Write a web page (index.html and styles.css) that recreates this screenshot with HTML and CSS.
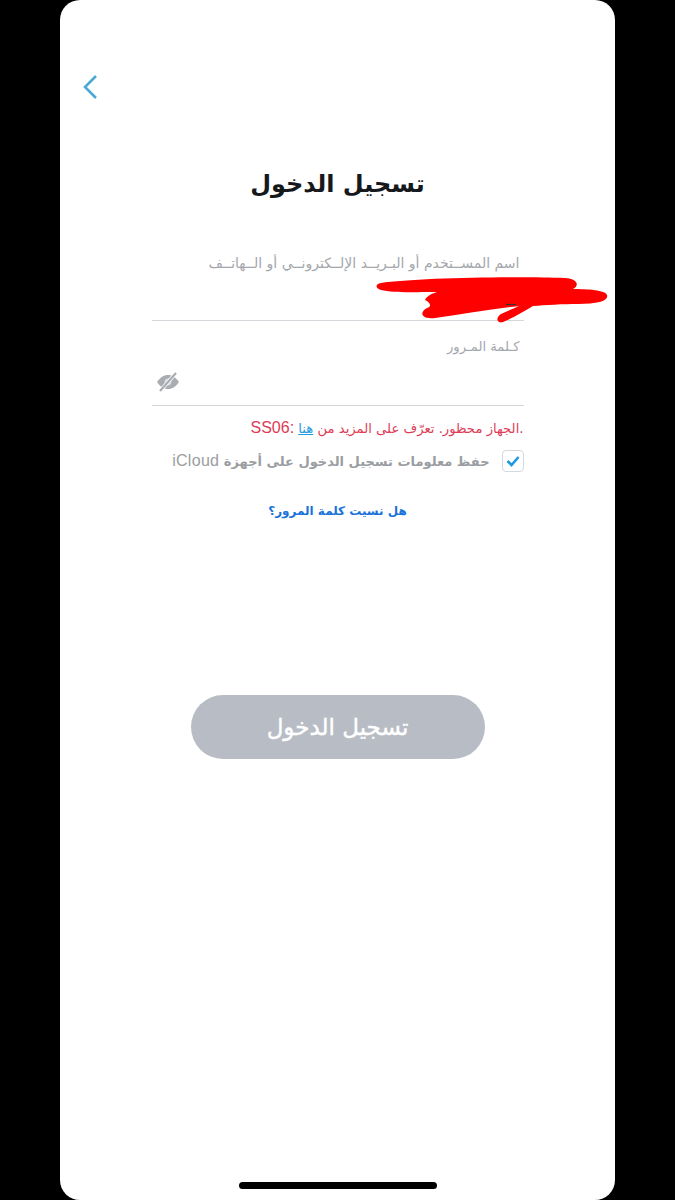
FILE: index.html
```html
<!DOCTYPE html>
<html lang="ar">
<head>
    <meta charset="UTF-8">
    <meta name="viewport" content="width=device-width, initial-scale=1.0">
    <title>تسجيل الدخول</title>
    <link rel="stylesheet" href="styles.css">
</head>
<body>

<div class="screen">
    <a class="back" href="#">
        <svg width="16" height="26" viewBox="0 0 16 26"><path d="M14 2 L3 13 L14 24" fill="none" stroke="#4aa9d6" stroke-width="2.6"/></svg>
    </a>

    <h1 class="title">تسجيل الدخول</h1>

    <form class="form" dir="rtl">
        <label class="field-label">اسم المســتخدم أو البـريــد الإلــكترونــي أو الــهاتــف</label>
        <div class="field field-user"></div>

        <label class="field-label field-label-pass">كـلمة المـرور</label>
        <div class="field field-pass">
            <!-- eye with a slash -->
            <svg class="eye" width="24" height="22" viewBox="0 0 24 22">
                <path d="M1 11 C5 5 9 4 12 4 C15 4 19 5 23 11 C19 17 15 18 12 18 C9 18 5 17 1 11 Z" fill="#a9adb2"/>
                <circle cx="12" cy="11" r="3.4" fill="#d9dbde"/>
                <path d="M4 20 L20 2" stroke="#fff" stroke-width="3.6"/>
                <path d="M4 20 L20 2" stroke="#a9adb2" stroke-width="2.2"/>
            </svg>
        </div>

        <p class="error"><span dir="ltr">.</span>الجهاز محظور. تعرّف على المزيد من <a href="#">هنا</a> <span class="latin" dir="ltr">SS06:</span></p>

        <div class="remember">
            <span class="checkbox">
                <svg width="14" height="12" viewBox="0 0 14 12"><path d="M1.5 6 L5.5 10 L12.5 2" fill="none" stroke="#1f9ae0" stroke-width="2.6"/></svg>
            </span>
            <span class="remember-text">حفظ معلومات تسجيل الدخول على أجهزة <span class="latin-cloud">iCloud</span></span>
        </div>

        <a class="forgot" href="#">هل نسيت كلمة المرور؟</a>
    </form>

    <button class="login-btn" type="button">تسجيل الدخول</button>

    <!-- red scribble over the username -->
    <svg class="scribble" width="236" height="50" viewBox="0 0 236 50">
        <path d="M8 7 C40 2 140 0 192 2 C206 3 206 10 200 13 C215 13 232 14 234 19 C236 25 225 28 205 28 C190 28 172 29 160 30 C150 36 140 42 130 46 C124 48 122 42 128 38 C134 35 140 33 146 30 C120 33 90 38 62 42 C48 44 46 36 54 32 C60 30 56 26 52 24 C54 20 58 18 64 16 C40 16 20 17 8 14 C2 12 2 8 8 7 Z" fill="#fe0000"/>
        <path d="M133 28.5 L143 28.5" stroke="#333" stroke-width="1.2"/>
    </svg>

    <div class="home-bar"></div>
</div>

</body>
</html>
```

FILE: styles.css
```css
* {
    box-sizing: border-box;
}

html, body {
    margin: 0;
    height: 100%;
}

body {
    background: #000;
    font-family: 'DejaVu Sans', sans-serif;
    overflow: hidden;
}

.screen {
    position: relative;
    width: 555px;
    height: 1200px;
    margin-left: 60px;
    background: #fff;
    border-radius: 20px;
    display: flex;
    flex-direction: column;
    align-items: center;
    padding-top: 74px;
}

.back {
    align-self: flex-start;
    margin-left: 22px;
    height: 28px;
    display: block;
}

.title {
    margin: 66px 0 0 0;
    width: 100%;
    text-align: center;
    font-size: 24px;
    line-height: 32px;
    font-weight: bold;
    color: #16191c;
}

.form {
    width: 372px;
    margin: 54px 0 0 0;
    display: flex;
    flex-direction: column;
}

.field-label {
    font-size: 14px;
    line-height: 18px;
    color: #a3a7ac;
    margin-right: 4px;
    white-space: nowrap;
}

.field {
    border-bottom: 1.5px solid #d5d8dc;
}

.field-user {
    height: 49px;
}

.field-label-pass {
    margin-top: 17px;
    font-size: 13.2px;
}

.field-pass {
    height: 50px;
    display: flex;
    align-items: center;
    justify-content: flex-end;
    padding-left: 4px;
    padding-top: 2px;
}

.error {
    margin: 12px 0 0 0;
    font-size: 13.2px;
    line-height: 20px;
    color: #dd3c55;
    white-space: nowrap;
}

.error a {
    color: #1f9ae0;
}

.latin {
    font-family: 'Liberation Sans', sans-serif;
    font-size: 16px;
}

.remember {
    margin-top: 11px;
    display: flex;
    align-items: center;
    gap: 12px;
}

.checkbox {
    width: 22px;
    height: 22px;
    border: 1.5px solid #d5d8dc;
    border-radius: 4px;
    display: flex;
    align-items: center;
    justify-content: center;
}

.remember-text {
    font-size: 13px;
    font-weight: bold;
    color: #9a9da1;
    white-space: nowrap;
}

.latin-cloud {
    font-family: 'Liberation Sans', sans-serif;
    font-size: 16px;
    font-weight: normal;
    letter-spacing: 0.3px;
}

.forgot {
    margin-top: 29px;
    text-align: center;
    font-size: 12px;
    line-height: 20px;
    font-weight: bold;
    color: #1a73d9;
    text-decoration: none;
}

.login-btn {
    margin-top: 174px;
    width: 294px;
    height: 64px;
    border: none;
    border-radius: 32px;
    background: #b8bdc5;
    color: #fff;
    font-family: inherit;
    font-size: 23px;
    -webkit-text-stroke: 0.4px #fff;
}

.scribble {
    position: absolute;
    left: 313px;
    top: 276px;
}

.home-bar {
    position: absolute;
    left: 179px;
    bottom: 11px;
    width: 198px;
    height: 7px;
    border-radius: 4px;
    background: #000;
}
```
